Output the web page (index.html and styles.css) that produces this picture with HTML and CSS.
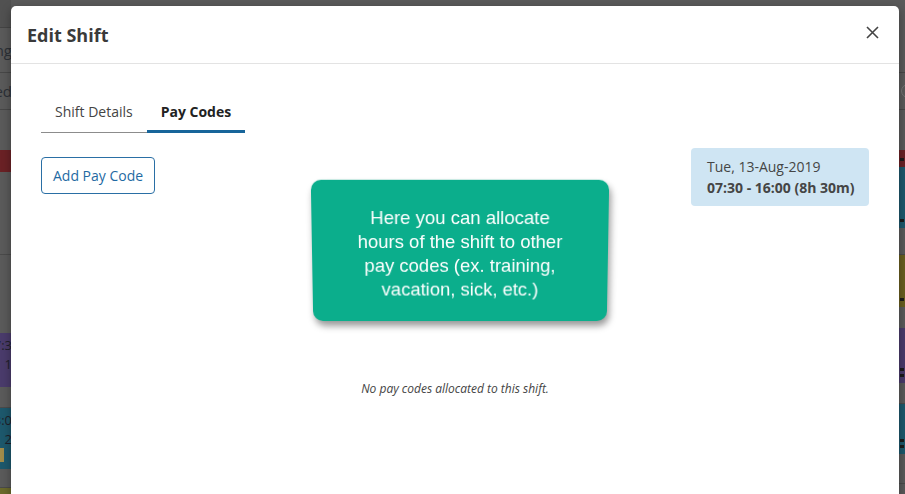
FILE: index.html
```html
<!DOCTYPE html>
<html lang="en">
<head>
<meta charset="utf-8">
<title>Edit Shift</title>
<link rel="stylesheet" href="styles.css">
</head>
<body>
  <!-- schedule behind the dimmed overlay -->
  <div class="backdrop">
    <div class="strip strip-left">
      <div class="seg seg-top"></div>
      <div class="seg seg-filter"><span class="clip-text">Viewing</span></div>
      <div class="seg seg-name"><span class="clip-text">Unassigned</span></div>
      <div class="seg seg-gap"></div>
      <div class="seg seg-red"></div>
      <div class="seg seg-blank-a"></div>
      <div class="seg seg-blank-b"></div>
      <div class="seg seg-purple"><span class="clip-line">07:3</span><span class="clip-line">1</span></div>
      <div class="seg seg-blank-c"></div>
      <div class="seg seg-teal"><span class="clip-line">08:0</span><span class="clip-line">2</span><span class="warn-dot"></span></div>
      <div class="seg seg-blank-d"></div>
      <div class="seg seg-olive-tail"></div>
    </div>
    <div class="strip strip-right">
      <div class="seg seg-top-r"></div>
      <div class="seg seg-name-r"><span class="ring"></span></div>
      <div class="seg seg-gap"></div>
      <div class="seg seg-red-r"><span class="mark"></span></div>
      <div class="seg seg-teal-r"><span class="mark"></span></div>
      <div class="seg seg-blank-r1"></div>
      <div class="seg seg-olive-r"><span class="mark"></span></div>
      <div class="seg seg-blank-r2"></div>
      <div class="seg seg-purple-r"><span class="mark"></span><span class="mark"></span></div>
      <div class="seg seg-blank-r3"></div>
      <div class="seg seg-teal-r2"><span class="mark"></span><span class="mark"></span></div>
      <div class="seg seg-blank-r4"></div>
    </div>
  </div>

  <div class="modal">
    <header class="modal-header">
      <h2 class="modal-title">Edit Shift</h2>
      <button class="close-btn" aria-label="Close">
        <svg width="13" height="13" viewBox="0 0 13 13"><path d="M1 1 L12 12 M12 1 L1 12" stroke="#444" stroke-width="1.6" fill="none"/></svg>
      </button>
    </header>
    <div class="modal-body">
      <nav class="tabs">
        <span class="tab">Shift Details</span>
        <span class="tab tab-active">Pay Codes</span>
      </nav>
      <div class="toolbar">
        <button class="btn-outline">Add Pay Code</button>
        <div class="shift-info">
          <div>Tue, 13-Aug-2019</div>
          <div class="shift-time">07:30 - 16:00 (8h 30m)</div>
        </div>
      </div>
      <p class="empty-note">No pay codes allocated to this shift.</p>
    </div>
    <div class="callout">
      <p>Here you can allocate<br>hours of the shift to other<br>pay codes (ex. training,<br>vacation, sick, etc.)</p>
    </div>
  </div>
</body>
</html>
```
FILE: styles.css
```css
* { box-sizing: border-box; }

body {
  margin: 0;
  width: 905px;
  height: 494px;
  overflow: hidden;
  position: relative;
  background: #5a5a5a;
  font-family: "Open Sans", "Liberation Sans", sans-serif;
}

/* ---- dimmed schedule ---- */
.backdrop {
  display: flex;
  justify-content: space-between;
  height: 494px;
}
.strip {
  display: flex;
  flex-direction: column;
  overflow: hidden;
}
.strip-left { width: 11px; }
.strip-right { width: 6px; }

.seg {
  flex: none;
  position: relative;
  display: flex;
  justify-content: flex-end;
  overflow: hidden;
  background: #5a5a5a;
}
.seg-top { height: 28px; background: #515151; border-bottom: 1px solid #444; }
.seg-filter { height: 45px; border-bottom: 1px solid #474747; align-items: center; }
.seg-name { height: 37px; border-bottom: 1px solid #474747; align-items: center; }
.seg-gap { height: 40px; }
.seg-red { height: 22px; background: #6a2125; }
.seg-blank-a { height: 83px; border-bottom: 1px solid #4a4a4a; }
.seg-blank-b { height: 78px; }
.seg-purple { height: 54px; background: #4a3b6b; }
.seg-blank-c { height: 21px; border-bottom: 1px solid #4a4a4a; }
.seg-teal { height: 61px; background: #1d586c; }
.seg-blank-d { height: 19px; border-bottom: 1px solid #4a4a4a; }
.seg-olive-tail { height: 6px; background: #6b6a2c; }

.seg-purple, .seg-teal {
  flex-direction: column;
  align-items: flex-end;
  justify-content: flex-start;
  padding-top: 3px;
}

.clip-text {
  white-space: nowrap;
  font-size: 15px;
  color: #2c3036;
  margin-right: -1px;
}
.clip-line {
  white-space: nowrap;
  font-size: 13px;
  line-height: 19px;
  color: #1f1f2a;
  margin-right: -1px;
}
.warn-dot {
  position: absolute;
  left: 0;
  top: 40px;
  width: 4px;
  height: 14px;
  background: #a18c4a;
}

.seg-top-r { height: 73px; border-bottom: 1px solid #474747; }
.seg-name-r { height: 37px; border-bottom: 1px solid #474747; }
.ring {
  position: absolute;
  left: 2px;
  top: 11px;
  width: 14px;
  height: 14px;
  border: 1px solid #777;
  border-radius: 50%;
}
.seg-red-r { height: 17px; background: #6a2125; }
.seg-teal-r { height: 61px; background: #1d586c; }
.seg-blank-r1 { height: 27px; border-bottom: 1px solid #4a4a4a; }
.seg-olive-r { height: 52px; background: #695e1f; }
.seg-blank-r2 { height: 21px; }
.seg-purple-r { height: 55px; background: #4a3b6b; }
.seg-blank-r3 { height: 21px; border-bottom: 1px solid #4a4a4a; }
.seg-teal-r2 { height: 50px; background: #1d586c; }
.seg-blank-r4 { height: 30px; border-bottom: 1px solid #4a4a4a; }

.seg-red-r, .seg-teal-r, .seg-olive-r, .seg-purple-r, .seg-teal-r2 {
  flex-direction: column;
  justify-content: flex-end;
  align-items: flex-start;
  padding-bottom: 6px;
  gap: 3px;
}
.mark {
  width: 4px;
  height: 3px;
  margin-left: 1px;
  background: #1b1b1b;
}

/* ---- modal ---- */
.modal {
  position: absolute;
  left: 11px;
  top: 6px;
  width: 888px;
  height: 500px;
  background: #fff;
  border-radius: 5px;
  box-shadow: 0 3px 10px rgba(0, 0, 0, 0.35);
}

.modal-header {
  height: 58px;
  border-bottom: 1px solid #e3e3e3;
  display: flex;
  align-items: center;
  justify-content: space-between;
  padding: 0 20px 0 16px;
}
.modal-title {
  margin: 0;
  font-size: 18px;
  font-weight: 700;
  color: #3a3a3a;
}
.close-btn {
  border: 0;
  background: none;
  padding: 0;
  margin-bottom: 4px;
  display: flex;
}

.modal-body {
  padding: 30px 30px 0 30px;
}

.tabs {
  display: flex;
  width: max-content;
  border-bottom: 1px solid #8c8c8c;
}
.tab {
  padding: 8px 14px;
  font-size: 14px;
  line-height: 20px;
  color: #444;
  border-bottom: 3px solid transparent;
  margin-bottom: -1px;
}
.tab-active {
  font-weight: 700;
  color: #222;
  border-bottom-color: #17659a;
}

.toolbar {
  display: flex;
  justify-content: space-between;
  align-items: flex-start;
  margin-top: 15px;
}
.btn-outline {
  margin-top: 9px;
  height: 37px;
  padding: 0 11px;
  background: #fff;
  border: 1px solid #2a6fa5;
  border-radius: 4px;
  font-family: "Open Sans", sans-serif;
  font-size: 14px;
  color: #1f6aa3;
}
.shift-info {
  width: 178px;
  padding: 8px 0 8px 16px;
  background: #cfe5f3;
  border-radius: 4px;
  font-size: 14px;
  line-height: 21px;
  color: #454545;
  white-space: nowrap;
}
.shift-time { font-weight: 700; }

.empty-note {
  margin: 174px 0 0;
  text-align: center;
  font-size: 12px;
  line-height: 17px;
  font-style: italic;
  color: #444;
}

/* ---- hint bubble over the body ---- */
.callout {
  position: absolute;
  left: 301px;
  top: 174px;
  width: 296px;
  height: 142px;
  padding-top: 6px;
  display: flex;
  align-items: center;
  justify-content: center;
  background: #0bae8c;
  border-radius: 10px;
  box-shadow: 2px 5px 7px rgba(0, 0, 0, 0.4);
  transform: perspective(900px) rotateX(-6deg);
}
.callout p {
  margin: 0;
  text-align: center;
  font-family: "Liberation Sans", Arial, sans-serif;
  font-size: 18.5px;
  line-height: 24px;
  color: #fff;
}
```
